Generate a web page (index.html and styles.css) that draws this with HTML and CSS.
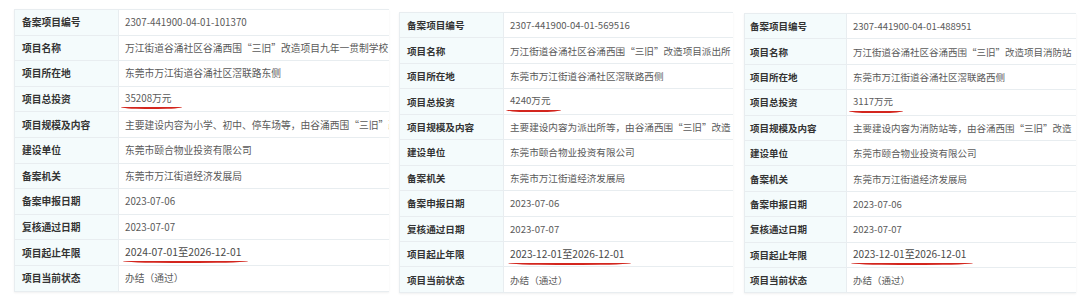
FILE: index.html
```html
<!DOCTYPE html>
<html lang="zh-CN">
<head>
<meta charset="utf-8">
<title>备案项目信息</title>
<link rel="stylesheet" href="styles.css">
</head>
<body>
<main class="board">
  <section class="record record--a">
    <div class="row"><div class="key">备案项目编号</div><div class="val">2307-441900-04-01-101370</div></div>
    <div class="row"><div class="key">项目名称</div><div class="val">万江街道谷涌社区谷涌西围<span class="q">“</span>三旧<span class="q">”</span>改造项目九年一贯制学校</div></div>
    <div class="row"><div class="key">项目所在地</div><div class="val">东莞市万江街道谷涌社区滘联路东侧</div></div>
    <div class="row"><div class="key">项目总投资</div><div class="val"><span class="mark mark--short">35208万元</span></div></div>
    <div class="row"><div class="key">项目规模及内容</div><div class="val">主要建设内容为小学、初中、停车场等，由谷涌西围<span class="q">“</span>三旧<span class="q">”</span>改造</div></div>
    <div class="row"><div class="key">建设单位</div><div class="val">东莞市颐合物业投资有限公司</div></div>
    <div class="row"><div class="key">备案机关</div><div class="val">东莞市万江街道经济发展局</div></div>
    <div class="row"><div class="key">备案申报日期</div><div class="val">2023-07-06</div></div>
    <div class="row"><div class="key">复核通过日期</div><div class="val">2023-07-07</div></div>
    <div class="row"><div class="key">项目起止年限</div><div class="val"><span class="mark mark--date">2024-07-01至2026-12-01</span></div></div>
    <div class="row"><div class="key">项目当前状态</div><div class="val">办结（通过）</div></div>
  </section>
  <section class="record record--b">
    <div class="row"><div class="key">备案项目编号</div><div class="val">2307-441900-04-01-569516</div></div>
    <div class="row"><div class="key">项目名称</div><div class="val">万江街道谷涌社区谷涌西围<span class="q">“</span>三旧<span class="q">”</span>改造项目派出所</div></div>
    <div class="row"><div class="key">项目所在地</div><div class="val">东莞市万江街道谷涌社区滘联路西侧</div></div>
    <div class="row"><div class="key">项目总投资</div><div class="val"><span class="mark mark--short">4240万元</span></div></div>
    <div class="row"><div class="key">项目规模及内容</div><div class="val">主要建设内容为派出所等，由谷涌西围<span class="q">“</span>三旧<span class="q">”</span>改造</div></div>
    <div class="row"><div class="key">建设单位</div><div class="val">东莞市颐合物业投资有限公司</div></div>
    <div class="row"><div class="key">备案机关</div><div class="val">东莞市万江街道经济发展局</div></div>
    <div class="row"><div class="key">备案申报日期</div><div class="val">2023-07-06</div></div>
    <div class="row"><div class="key">复核通过日期</div><div class="val">2023-07-07</div></div>
    <div class="row"><div class="key">项目起止年限</div><div class="val"><span class="mark mark--date">2023-12-01至2026-12-01</span></div></div>
    <div class="row"><div class="key">项目当前状态</div><div class="val">办结（通过）</div></div>
  </section>
  <section class="record record--c">
    <div class="row"><div class="key">备案项目编号</div><div class="val">2307-441900-04-01-488951</div></div>
    <div class="row"><div class="key">项目名称</div><div class="val">万江街道谷涌社区谷涌西围<span class="q">“</span>三旧<span class="q">”</span>改造项目消防站</div></div>
    <div class="row"><div class="key">项目所在地</div><div class="val">东莞市万江街道谷涌社区滘联路西侧</div></div>
    <div class="row"><div class="key">项目总投资</div><div class="val"><span class="mark mark--short">3117万元</span></div></div>
    <div class="row"><div class="key">项目规模及内容</div><div class="val">主要建设内容为消防站等，由谷涌西围<span class="q">“</span>三旧<span class="q">”</span>改造</div></div>
    <div class="row"><div class="key">建设单位</div><div class="val">东莞市颐合物业投资有限公司</div></div>
    <div class="row"><div class="key">备案机关</div><div class="val">东莞市万江街道经济发展局</div></div>
    <div class="row"><div class="key">备案申报日期</div><div class="val">2023-07-06</div></div>
    <div class="row"><div class="key">复核通过日期</div><div class="val">2023-07-07</div></div>
    <div class="row"><div class="key">项目起止年限</div><div class="val"><span class="mark mark--date">2023-12-01至2026-12-01</span></div></div>
    <div class="row"><div class="key">项目当前状态</div><div class="val">办结（通过）</div></div>
  </section>
</main>
</body>
</html>
```

FILE: styles.css
```css
html, body {
  margin: 0;
  padding: 0;
  background: #ffffff;
}

body {
  width: 1080px;
  height: 308px;
  overflow: hidden;
  font-family: "Noto Sans CJK SC", "Noto Sans", sans-serif;
}

.board {
  display: flex;
  align-items: flex-start;
}

.record {
  --fs: 9.75px;
  --rowh: 25.6px;
  --keyw: 104px;
  --keypad: 7px;
  display: flex;
  flex-direction: column;
  flex: none;
  border-top: 1px solid #e8edf0;
  border-left: 1px solid #e8edf0;
  box-shadow: 0 1px 2px rgba(0, 0, 0, 0.06);
  font-size: var(--fs);
}

.record--a {
  width: 374px;
  margin-left: 14px;
  margin-top: 9px;
}

.record--b {
  --fs: 9.6px;
  --rowh: 25.45px;
  margin-left: 10px;
  margin-top: 12px;
  width: 333px;
}

.record--c {
  --fs: 9.5px;
  --rowh: 25.4px;
  --keyw: 102px;
  --keypad: 5px;
  margin-left: 11px;
  margin-top: 13px;
  width: 331px;
}

.row {
  display: grid;
  grid-template-columns: var(--keyw) 1fr;
  height: var(--rowh);
  border-bottom: 1px solid #e8edf0;
  box-sizing: border-box;
}

.key {
  display: flex;
  align-items: center;
  padding-left: var(--keypad);
  background: #f4fbfc;
  color: #333333;
  font-weight: 700;
  border-right: 1px solid #e8edf0;
  white-space: nowrap;
  overflow: hidden;
}

.val {
  display: flex;
  align-items: center;
  padding-left: 6px;
  color: #5a5a5a;
  white-space: nowrap;
  overflow: hidden;
}

.q {
  display: inline-block;
  width: 1em;
  text-align: center;
}

.mark {
  display: inline-block;
  line-height: 1.3;
  padding: 0 8px 3px 2px;
  margin-left: -2px;
  margin-top: 3px;
  border-bottom: 2px solid #d3261e;
  border-radius: 0 0 40% 40% / 0 0 2px 2px;
}

.mark--short {
  padding-left: 4px;
  margin-left: -4px;
  padding-right: 10px;
}

.mark--date {
  font-size: 1.06em;
  color: #4a4a4a;
  padding-right: 7px;
}
```
